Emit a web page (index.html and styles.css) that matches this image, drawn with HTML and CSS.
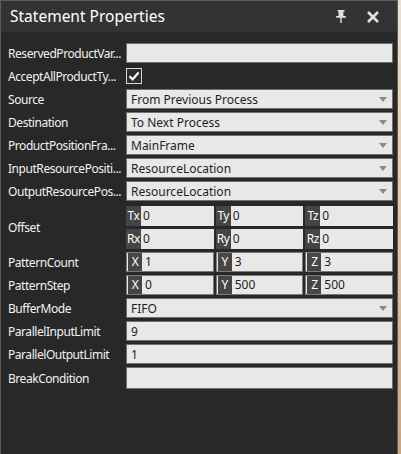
FILE: index.html
```html
<!DOCTYPE html>
<html>
<head>
<meta charset="utf-8">
<link rel="stylesheet" href="styles.css">
</head>
<body>
<div class="panel">
  <div class="titlebar">
    <span class="title">Statement Properties</span>
    <span class="tools">
      <svg class="pin" width="10" height="13" viewBox="0 0 10 13"><path d="M1.5 0H8.5V1.6H7.4V6H9.8V7.8H0.2V6H2.6V1.6H1.5Z M4.3 7.8H5.7V13H4.3Z" fill="#e2e2e2"/></svg>
      <svg class="close" width="14" height="14" viewBox="0 0 14 14"><path d="M2 2L12 12M12 2L2 12" stroke="#e2e2e2" stroke-width="2.6" stroke-linecap="butt"/></svg>
    </span>
  </div>
  <div class="props">
    <div class="label">ReservedProductVar...</div>
    <div class="field"></div>

    <div class="label">AcceptAllProductTy...</div>
    <div class="checkrow"><span class="check"><svg width="14" height="14" viewBox="0 0 14 14"><path d="M2.5 7.3L5.6 10.4L11.6 3.6" fill="none" stroke="#ffffff" stroke-width="2.2"/></svg></span></div>

    <div class="label">Source</div>
    <div class="field combo"><span>From Previous Process</span><i class="arrow"></i></div>

    <div class="label">Destination</div>
    <div class="field combo"><span>To Next Process</span><i class="arrow"></i></div>

    <div class="label">ProductPositionFra...</div>
    <div class="field combo"><span>MainFrame</span><i class="arrow"></i></div>

    <div class="label">InputResourcePositi...</div>
    <div class="field combo"><span>ResourceLocation</span><i class="arrow"></i></div>

    <div class="label">OutputResourcePos...</div>
    <div class="field combo"><span>ResourceLocation</span><i class="arrow"></i></div>

    <div class="label offset-label">Offset</div>
    <div class="offset">
      <div class="vec">
        <div class="cell"><b>Tx</b><span>0</span></div>
        <div class="cell"><b>Ty</b><span>0</span></div>
        <div class="cell"><b>Tz</b><span>0</span></div>
      </div>
      <div class="vec">
        <div class="cell"><b>Rx</b><span>0</span></div>
        <div class="cell"><b>Ry</b><span>0</span></div>
        <div class="cell"><b>Rz</b><span>0</span></div>
      </div>
    </div>

    <div class="label">PatternCount</div>
    <div class="vec">
      <div class="cell framed"><b>X</b><span>1</span></div>
      <div class="cell framed"><b>Y</b><span>3</span></div>
      <div class="cell framed"><b>Z</b><span>3</span></div>
    </div>

    <div class="label">PatternStep</div>
    <div class="vec">
      <div class="cell framed"><b>X</b><span>0</span></div>
      <div class="cell framed"><b>Y</b><span>500</span></div>
      <div class="cell framed"><b>Z</b><span>500</span></div>
    </div>

    <div class="label">BufferMode</div>
    <div class="field combo"><span>FIFO</span><i class="arrow"></i></div>

    <div class="label">ParallelInputLimit</div>
    <div class="field"><span>9</span></div>

    <div class="label">ParallelOutputLimit</div>
    <div class="field"><span>1</span></div>

    <div class="label">BreakCondition</div>
    <div class="field tall"></div>
  </div>
</div>
</body>
</html>
```
FILE: styles.css
```css
html, body {
  margin: 0;
  padding: 0;
}
body {
  width: 401px;
  height: 454px;
  overflow: hidden;
  background: linear-gradient(180deg, #ecdfd2 0%, #dcc2a6 60%, #c9a47f 100%);
  font-family: "Noto Sans", "Open Sans", sans-serif;
}
.panel {
  width: 396px;
  height: 453px;
  border: 1px solid #5c5c5c;
  border-bottom: none;
  background: #282828;
}
.titlebar {
  height: 31px;
  background: #333333;
  display: flex;
  align-items: center;
  justify-content: space-between;
  padding: 0 0 0 9px;
}
.title {
  color: #ffffff;
  font-size: 15.5px;
  line-height: 20px;
  margin-top: -2px;
}
.tools {
  display: flex;
  align-items: center;
  margin-right: 17px;
}
.pin {
  display: block;
  margin-right: 20px;
  margin-top: -1px;
}
.close {
  display: block;
}
.props {
  display: grid;
  grid-template-columns: 115px 1fr;
  column-gap: 3px;
  row-gap: 3px;
  padding: 11px 4px 0 7px;
}
.label {
  color: #f2f2f2;
  font-size: 12px;
  letter-spacing: -0.45px;
  line-height: 19px;
  padding-top: 1px;
  height: 20px;
  box-sizing: border-box;
  white-space: nowrap;
  align-self: center;
}
.field {
  height: 20px;
  box-sizing: border-box;
  background: #e8e8e8;
  border: 1px solid #707070;
  display: flex;
  align-items: center;
  padding-left: 4px;
  font-size: 12px;
  color: #1e1e1e;
}
.field.tall {
  height: 22px;
}
.combo {
  justify-content: space-between;
}
.arrow {
  width: 0;
  height: 0;
  border-left: 4px solid transparent;
  border-right: 4px solid transparent;
  border-top: 5px solid #8a8a8a;
  margin-right: 5px;
}
.checkrow {
  height: 20px;
  display: flex;
  align-items: center;
}
.check {
  width: 16px;
  height: 16px;
  box-sizing: border-box;
  border: 1px solid #d8d8d8;
  background: #2e2e2e;
  display: flex;
  align-items: center;
  justify-content: center;
}
.check svg {
  display: block;
}
.offset {
  display: flex;
  flex-direction: column;
  gap: 3px;
  padding-top: 2px;
}
.vec {
  display: grid;
  grid-template-columns: 1fr 1fr 1fr;
  column-gap: 2px;
}
.cell {
  height: 20px;
  box-sizing: border-box;
  display: flex;
  background: #e8e8e8;
  font-size: 12px;
  line-height: 20px;
  color: #1e1e1e;
}
.cell b {
  font-weight: normal;
  color: #ffffff;
  background: #454545;
  width: 15px;
  text-align: center;
  letter-spacing: -0.5px;
  flex: none;
}
.cell span {
  padding-left: 2px;
}
.cell.framed {
  border: 1px solid #7a7a7a;
  line-height: 18px;
}
.cell.framed b {
  width: 14px;
  margin-left: 1px;
  background: #464646;
}
.cell.framed span {
  padding-left: 3px;
}
```
